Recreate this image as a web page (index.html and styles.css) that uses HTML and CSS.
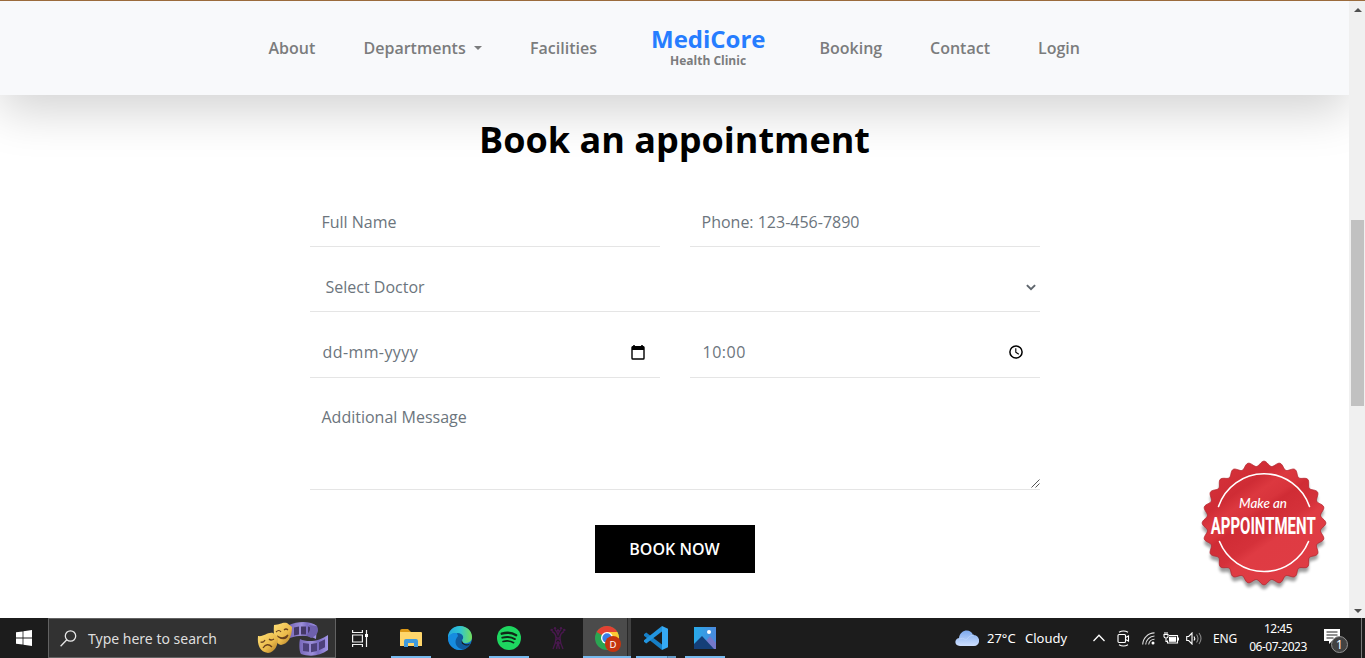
FILE: index.html
```html
<!DOCTYPE html>
<html lang="en">
<head>
<meta charset="utf-8">
<title>MediCore Health Clinic</title>
<link rel="stylesheet" href="styles.css">
</head>
<body>
<div class="window">
  <div class="page">
    <header class="navbar">
      <a class="link about">About</a>
      <a class="link departments">Departments<i class="caret"></i></a>
      <a class="link facilities">Facilities</a>
      <a class="brand"><strong>MediCore</strong><small>Health Clinic</small></a>
      <a class="link booking">Booking</a>
      <a class="link contact">Contact</a>
      <a class="link login">Login</a>
    </header>
    <main class="appointment">
      <h2>Book an appointment</h2>
      <form class="form">
        <input class="field" type="text" placeholder="Full Name">
        <input class="field" type="text" placeholder="Phone: 123-456-7890">
        <div class="field wide select"><span>Select Doctor</span>
          <svg width="10" height="7" viewBox="0 0 10 7"><path d="M.9 1.100 5 5.100 9.100 1.100" fill="none" stroke="#5f666d" stroke-width="2"/></svg>
        </div>
        <div class="field picker date"><span>dd-mm-yyyy</span>
          <svg width="14" height="15" viewBox="0 0 14 15"><path d="M3 0v2M11 0v2" stroke="#000" stroke-width="1.600"/><rect x="1" y="1.700" width="12" height="12.300" rx=".8" fill="none" stroke="#000" stroke-width="1.400"/><path d="M1 1.500h12V5H1z"/></svg>
        </div>
        <div class="field picker time"><span>10:00</span>
          <svg width="14" height="14" viewBox="0 0 14 14"><circle cx="7" cy="7" r="6.100" fill="none" stroke="#000" stroke-width="1.500"/><path d="M6.800 3.300v4l3 2" fill="none" stroke="#000" stroke-width="1.100"/></svg>
        </div>
        <div class="message wide"><span>Additional Message</span>
          <svg width="9" height="9" viewBox="0 0 9 9"><path d="M.5 8.500l8-8M4.500 8.500l4-4" stroke="#555" stroke-width="1"/></svg>
        </div>
        <button class="submit wide" type="button">BOOK NOW</button>
      </form>
    </main>
    <a class="badge">
      <svg width="136" height="136" viewBox="-68 -64 136 136">
        <defs>
          <linearGradient id="red" x1="0" y1="0" x2=".7" y2="1"><stop offset="0" stop-color="#da343c"/><stop offset=".3" stop-color="#cf2c35"/><stop offset=".38" stop-color="#dc383f"/><stop offset=".46" stop-color="#d8343c"/><stop offset=".5" stop-color="#d02c35"/><stop offset=".64" stop-color="#d5313a"/><stop offset=".7" stop-color="#df3b43"/><stop offset="1" stop-color="#df3c44"/></linearGradient>
          <filter id="soft" x="-20%" y="-20%" width="140%" height="140%"><feGaussianBlur stdDeviation="1.8"/></filter>
        </defs>
        <path class="seal" transform="translate(0 4.500)" fill="#000" opacity=".38" filter="url(#soft)"/>
        <path class="seal" fill="url(#red)" stroke="#b72831" stroke-width=".9"/>
        <path d="M-45.500 -16.500A48 48 0 0 1 45.500 -16.500M-44.500 18.500A48 48 0 0 0 44.500 18.500" fill="none" stroke="#fff" stroke-width="1.600" stroke-linecap="round"/>
        <text class="badge-small" x="-1" y="-15" textLength="48" lengthAdjust="spacingAndGlyphs">Make an</text>
        <text class="badge-big" x="-.8" y="10.500" textLength="105" lengthAdjust="spacingAndGlyphs">APPOINTMENT</text>
      </svg>
    </a>
  </div>
  <div class="scrollbar"><i class="arrow up"></i><i class="thumb"></i><i class="arrow down"></i></div>
</div>
<footer class="taskbar">
  <div class="start"><svg width="16" height="16" viewBox="0 0 16 16" fill="#fff"><path d="M0 2.300 6.600 1.400V7.500H0zM7.400 1.300 16 0v7.500H7.400zM0 8.400h6.600v6.200L0 13.700zM7.400 8.400H16V16l-8.600-1.300z"/></svg></div>
  <div class="search">
    <svg width="17" height="17" viewBox="0 0 17 17" fill="none" stroke="#e8e8e8" stroke-width="1.300"><circle cx="10.500" cy="6" r="5.200"/><path d="M6.800 9.800.6 16.200"/></svg>
    <span>Type here to search</span>
    <svg class="masks" width="72" height="36" viewBox="0 0 72 36">
      <defs><linearGradient id="gold" x1="0" y1="0" x2="1" y2="1"><stop offset="0" stop-color="#ffe078"/><stop offset=".6" stop-color="#eab949"/><stop offset="1" stop-color="#a97625"/></linearGradient><linearGradient id="film" x1="0" y1="0" x2="1" y2="0"><stop offset="0" stop-color="#7767b9"/><stop offset=".45" stop-color="#9c8fda"/><stop offset=".65" stop-color="#796bc0"/><stop offset="1" stop-color="#a497e8"/></linearGradient></defs>
      <path d="M32 4c9-4 22-4 28 1l-1 13c-8-4-17-4-26-1z" fill="url(#film)"/>
      <path d="M37 6.500l5-1v8l-5 1zM44 5.500h5v8h-5zM51 5.500l5 1v8l-5-1z" fill="#443866"/>
      <path d="M60 5c3 6-1 10-6 12l-5-3c4-3 5-6 3-10z" fill="#6e60ad"/>
      <path d="M43 18c8 4 20 2 28-4v15c-8 6-18 7-27 4-2-3-2-11-1-15z" fill="url(#film)"/>
      <path d="M46 22l6 .8v8l-6-.8zM54 23l6-1v8l-6 1.300zM62 21.300l6-3v8l-6 3z" fill="#4d417b"/>
      <path d="M17 4c6 0 8-3 13-2l5 4c0 10-4 17-11 18-6-1-8-10-7-20z" fill="url(#gold)"/>
      <path d="M19 11q3-3 5 0m3-2q2-2 4 0M20 15q6 4 11-1-3 7-11 1" fill="none" stroke="#6a421e" stroke-width="1.200"/>
      <path d="M1 15c6 1 9-4 15-3l5 4c0 9-3 15-10 16C3 31 0 24 1 15z" fill="url(#gold)"/>
      <path d="M3.500 21q3 1 4.500-2m4-1q2 2 5 0M6 27q4-6 9-1" fill="none" stroke="#6a421e" stroke-width="1.300"/>
    </svg>
  </div>
  <div class="app view"><svg width="18" height="17" viewBox="0 0 18 17" fill="none" stroke="#f2f2f2" stroke-width="1.200"><path d="M1.600 0v2.500h9.800V0M1.600 17v-2.500h9.800V17M1.600 5h9.800v7H1.600zM15.500 0v17"/><path d="M14 4h3v3h-3z" fill="#fff" stroke="none"/></svg></div>
  <div class="app open"><svg width="22" height="18" viewBox="0 0 22 18"><path d="M0 2q0-2 2-2h6l3 3H0z" fill="#dc9816"/><path d="M0 3h21q1 0 1 1v13H0z" fill="#ffd66b"/><path d="M4 18v-6q0-2 2-2h10q2 0 2 2v6h-4v-4H8v4z" fill="#409bdc"/></svg></div>
  <div class="app"><svg width="24" height="24" viewBox="0 0 24 24">
    <defs><linearGradient id="edge1"><stop offset="0" stop-color="#24a8df"/><stop offset=".5" stop-color="#30c4d2"/><stop offset="1" stop-color="#75df58"/></linearGradient></defs>
    <circle cx="12" cy="12" r="12" fill="#147bcc"/><path d="M0 10C1 4 6 0 12 0c7 0 12 5 12 11 0 4-3 6-7 6-3 0-4-2-3-3 3-4-1-7-5-7-4 0-7 1-9 5z" fill="url(#edge1)"/><path d="M9 7c5 0 8 4 5 7-1 2 1 4 4 4 2 0 4-1 5-2-2 5-6 8-11 8-3-1-7-4-7-9 0-4 1-7 4-8z" fill="#105b9f"/><path d="M10 10c-5 6-2 12 5 13.500C8 26 0 20 0 12c1-4 5-5 9-5l1 3z" fill="#168ce0"/><path d="M14 14q-2 4 4 5.500 3 0 4-1.500-4 1-6-.5t-2-3.500z" fill="#1c1c1c"/></svg></div>
  <div class="app open"><svg width="24" height="24" viewBox="0 0 24 24"><circle cx="12" cy="12" r="12" fill="#1ed760"/><g fill="none" stroke="#102818" stroke-linecap="round"><path d="M4.700 7.700q8-2.500 14.500 1.500" stroke-width="2.300"/><path d="M5.300 11.700q7-2 12.600 1.400" stroke-width="1.900"/><path d="M6 15.500q6-1.600 10.600 1.200" stroke-width="1.600"/></g></svg></div>
  <div class="app"><svg width="16" height="23" viewBox="0 0 16 23" fill="none" stroke="#49184e" stroke-width="1.400"><path d="M2 4.500q4 2 4 6.500 0 5-3 11M14 4.500q-4 2-4 6.500 0 5 3 11M5 2.500q2 2 3 5 1-3 3-5M6.500 22q1-4 1.500-8 .5 4 1.500 8M6 10l4 3M10 10l-4 3M5.500 16h5"/><g fill="#49184e" stroke="none"><circle cx="1.700" cy="3" r="1.300"/><circle cx="5" cy="1.200" r="1.200"/><circle cx="8" cy="3.500" r="1.200"/><circle cx="11" cy="1.200" r="1.200"/><circle cx="14.300" cy="3" r="1.300"/></g></svg></div>
  <div class="app chrome"><svg width="27" height="27" viewBox="0 0 27 27"><circle cx="12" cy="12" r="12" fill="#2ba552"/><path d="M12 12 1.600 6A12 12 0 0 1 22.400 6z" fill="#e34133"/><path d="M12 6h10.400A12 12 0 0 1 12 24l5-9z" fill="#fcc934"/><circle cx="12" cy="12" r="6" fill="#fff"/><circle cx="12" cy="12" r="4.700" fill="#387ee8"/><circle cx="18" cy="18" r="8" fill="#c5340f"/><text class="initial" x="18" y="21.500">D</text></svg></div>
  <div class="app open split"><svg width="24" height="24" viewBox="0 0 24 24"><path d="M0 8.200 2.200 6.500 18 18.500V24L0 9.700z" fill="#167fc6"/><path d="M0 15.800 2.200 17.500 18 5.500V0L0 14.300z" fill="#2295df"/><path d="M18 0l6 2.700v18.600L18 24z" fill="#35a9f3"/></svg></div>
  <div class="app open"><svg width="22" height="22" viewBox="0 0 22 22"><defs><linearGradient id="sky" x1="0" y1="0" x2="1" y2="0"><stop offset="0" stop-color="#27aae9"/><stop offset="1" stop-color="#4b89dd"/></linearGradient></defs><path d="M0 0h22v22H0z" fill="url(#sky)"/><path d="M11 15l5-6 6 7v6H11z" fill="#7478ca"/><path d="M0 17l8-8 12 13H0z" fill="#153f78"/><circle cx="15" cy="5" r="2" fill="#fff"/></svg></div>
  <div class="weather"><svg width="24" height="17" viewBox="0 0 24 17"><defs><linearGradient id="cloud" x1="0" y1="0" x2="0" y2="1"><stop offset="0" stop-color="#7da9ed"/><stop offset="1" stop-color="#cfe0ff"/></linearGradient></defs><path d="M5 16C-1 16-1 9 4 8 5-1 16-2 18 5c8 0 8 11 1 11z" fill="url(#cloud)"/><path d="M4 9q4-2 7 1 3-5 8-5" fill="none" stroke="#b8d2fb"/></svg><span class="temp">27°C</span><span class="sky">Cloudy</span></div>
  <div class="tray">
    <svg width="12" height="8" viewBox="0 0 12 8" fill="none" stroke="#fff" stroke-width="1.300"><path d="M.5 7 6 1.300 11.500 7"/></svg>
    <svg width="13" height="17" viewBox="0 0 13 17" fill="none" stroke="#fff" stroke-width="1.100"><rect x="1" y="4.500" width="7.500" height="8" rx="1"/><path d="M8.500 7.500 11.500 6v5l-3-1.500M2 2.200q4.500-2.500 9 0M2 14.800q4.500 2.500 9 0"/></svg>
    <svg width="13" height="13" viewBox="0 0 13 13" fill="none" stroke="#ddd" stroke-width="1.100"><path d="M.7 12.500A12 12 0 0 1 12.500.9M3.700 12.500A9 9 0 0 1 12.500 4M6.700 12.500a6 6 0 0 1 5.800-5.300"/><circle cx="11" cy="11" r="1.500" fill="#fff" stroke="none"/></svg>
    <svg width="16" height="13" viewBox="0 0 16 13" fill="none" stroke="#fff" stroke-width="1.100"><path d="M6 3.500h8.500V11h-10V8.500M2 0v2M4 0v2M1 2.500h4v2Q5 6 3 6T1 4.500zM3 6v3.500h1.500"/><path d="M6.500 5.300h6v4h-6z" fill="#fff"/><path d="M15.500 5.500v3"/></svg>
    <svg width="16" height="13" viewBox="0 0 16 13" fill="none" stroke="#fff" stroke-width="1.100"><path d="M.7 4.500h2L6 1v11L2.700 8.500h-2z"/><path d="M8 4.500q1.500 2 0 4"/><path d="M10.500 2.500q3 4 0 8M13 1q4 5.500 0 11" stroke="#888"/></svg>
    <span class="lang">ENG</span>
  </div>
  <div class="clock"><span class="hour">12:45</span><span class="day">06-07-2023</span></div>
  <div class="notices"><svg width="26" height="27" viewBox="0 0 26 27"><path d="M1 1h16v12H9l-3 3v-3H1z" fill="#fff"/><path d="M3.500 4h11M3.500 7h11M3.500 10h7" stroke="#222" stroke-width="1.200"/><circle cx="16.500" cy="16.500" r="8" fill="#424242" stroke="#929292"/><text class="count" x="16.500" y="20.700">1</text></svg></div>
</footer>
<script src="seal.js"></script>
</body>
</html>
```

FILE: styles.css
```css
* { box-sizing: border-box; }
body { margin: 0; width: 1365px; height: 658px; overflow: hidden; display: flex; flex-direction: column; background: #fff; font-family: "Open Sans", sans-serif; }
svg { display: block; flex: none; }
.window { height: 618px; display: flex; border-top: 1px solid #9b6b3c; flex: none; }
.page { width: 1349px; position: relative; overflow: hidden; }
.navbar { position: relative; height: 94px; padding-left: 268.500px; display: flex; align-items: center; background: #f8f9fb; box-shadow: 0 16px 48px rgba(0,0,0,.175); color: #7b7c7d; }
.link { font-size: 16px; font-weight: 600; line-height: 24px; white-space: nowrap; flex: none; }
.about { width: 95px; }
.departments { width: 166.500px; display: flex; align-items: center; }
.caret { margin-left: 8px; border: 4.500px solid transparent; border-top-color: currentColor; border-bottom: 0; }
.facilities { width: 121px; }
.brand { width: 168.500px; display: flex; flex-direction: column; padding-bottom: 3px; }
.brand strong { color: #267dff; font-size: 24px; line-height: 28px; font-weight: 700; }
.brand small { padding-left: 19px; font-size: 12px; line-height: 16px; font-weight: 700; }
.booking { width: 110.500px; }
.contact { width: 108px; }
.appointment { padding-top: 21px; }
.appointment h2 { margin: 0; text-align: center; color: #000; font-size: 36px; line-height: 48px; font-weight: 700; position: relative; }
.form { width: 730px; margin: 33px auto 0 310px; display: grid; grid-template-columns: 350px 350px; grid-template-rows: 50px 50px 51px 97px 48px; column-gap: 30px; row-gap: 15px; color: #6c757d; font-size: 16px; }
.wide { grid-column: 1 / -1; }
.field { min-width: 0; border: 0; border-bottom: 1px solid #e5e5e5; padding: 0 11.500px; font: 16px "Open Sans", sans-serif; line-height: 24px; outline: 0; background: transparent; color: #6c757d; display: flex; align-items: center; justify-content: space-between; }
.field::placeholder { color: #6c757d; opacity: 1; }
.select { padding: 1px 4px 0 15.500px; }
.picker { padding: 0 15px 0 12.500px; }
.date span { letter-spacing: .4px; }
.time { padding-right: 17px; }
.time span { letter-spacing: .5px; }
.message { border-bottom: 1px solid #e5e5e5; padding: 12px 0 1px 11.500px; line-height: 24px; display: flex; justify-content: space-between; }
.message svg { align-self: flex-end; }
.submit { justify-self: center; margin-top: 20px; width: 160px; height: 48px; border: 0; padding: 0 1px 0 0; background: #000; color: #fff; font: 600 16px "Open Sans", sans-serif; }
.badge { position: absolute; left: 1196px; top: 458px; }
.badge svg { overflow: visible; }
.badge-small { font: italic 500 13px Lato, sans-serif; fill: #fff; text-anchor: middle; }
.badge-big { font: 700 23px "Roboto", sans-serif; fill: #fff; text-anchor: middle; }
.scrollbar { width: 16px; background: #f0f0f0; display: flex; flex-direction: column; align-items: center; padding: 7px 0 5px 1px; }
.arrow { border: 4px solid transparent; }
.up { border-top: 0; border-bottom-color: #505050; }
.down { border-bottom: 0; border-top-color: #505050; margin-top: auto; }
.thumb { width: 13px; height: 186px; margin-top: 208px; background: #c1c1c1; }
.taskbar { height: 40px; display: flex; background: #1c1c1c; color: #fff; font-family: "Noto Sans", sans-serif; flex: none; }
.start { width: 48px; display: grid; place-items: center; }
.search { width: 288px; padding-left: 11px; border: 1px solid #626262; background: #323232; display: flex; align-items: center; color: #dedede; font-size: 14px; margin-right: 1px; }
.search span { margin-left: 11px; width: 169px; white-space: nowrap; }
.masks { align-self: flex-start; margin-top: 2px; }
.app { width: 48px; margin-right: 1px; padding-left: 1px; display: grid; place-items: center; position: relative; flex: none; }
.view { padding: 0 2px 0 0; }
.open::after { content: ""; position: absolute; left: 5px; bottom: 0; width: 40px; height: 2px; background: #76b9ed; }
.split::after { background: linear-gradient(90deg, #76b9ed 31px, #527fa4 31px 32px, #649bc7 32px); }
.chrome { left: 1px; background: linear-gradient(90deg, #4b4b4b 44px, #292929 44px 45px, #414141 45px); padding: 3px 0 0 2px; }
.chrome::after { content: ""; position: absolute; left: 0; bottom: 0; width: 48px; height: 2px; background: #76b9ed; }
.initial { font: 9.500px "Noto Sans", sans-serif; fill: #fff; text-anchor: middle; }
.weather { margin-left: 226px; width: 138px; display: flex; align-items: center; font-size: 13px; white-space: nowrap; flex: none; }
.temp { margin-left: 8px; width: 38px; }
.tray { display: flex; align-items: center; width: 155px; flex: none; font-size: 12px; }
.tray svg { margin-right: 12px; }
.tray svg:nth-child(3) { margin-right: 8px; }
.tray svg:nth-child(4) { margin-right: 7px; }
.tray svg:nth-child(5) { margin-right: 11px; }
.lang { flex: none; letter-spacing: -.2px; }
.clock { width: 60px; text-align: center; display: flex; flex-direction: column; font-size: 12px; line-height: 18px; padding-top: 2px; white-space: nowrap; flex: none; }
.hour, .day { letter-spacing: -.5px; }
.notices { margin-left: 15px; width: 39px; border-right: 1px solid #777; padding-top: 10px; flex: none; }
.count { font: 12px "Noto Sans", sans-serif; fill: #fff; text-anchor: middle; }
```

FILE: seal.js
```js
// Scalloped outline shared by the seal and its shadow.
const teeth = 24;
const points = [];
for (let i = 0; i < 480; i++) {
  const a = i / 480 * Math.PI * 2;
  const r = 59.4 + 2.4 * Math.cos(teeth * (a + Math.PI / 2));
  points.push((r * Math.cos(a)).toFixed(2) + " " + (r * Math.sin(a)).toFixed(2));
}
document.querySelectorAll(".seal").forEach(p => p.setAttribute("d", "M" + points.join("L") + "Z"));
```
